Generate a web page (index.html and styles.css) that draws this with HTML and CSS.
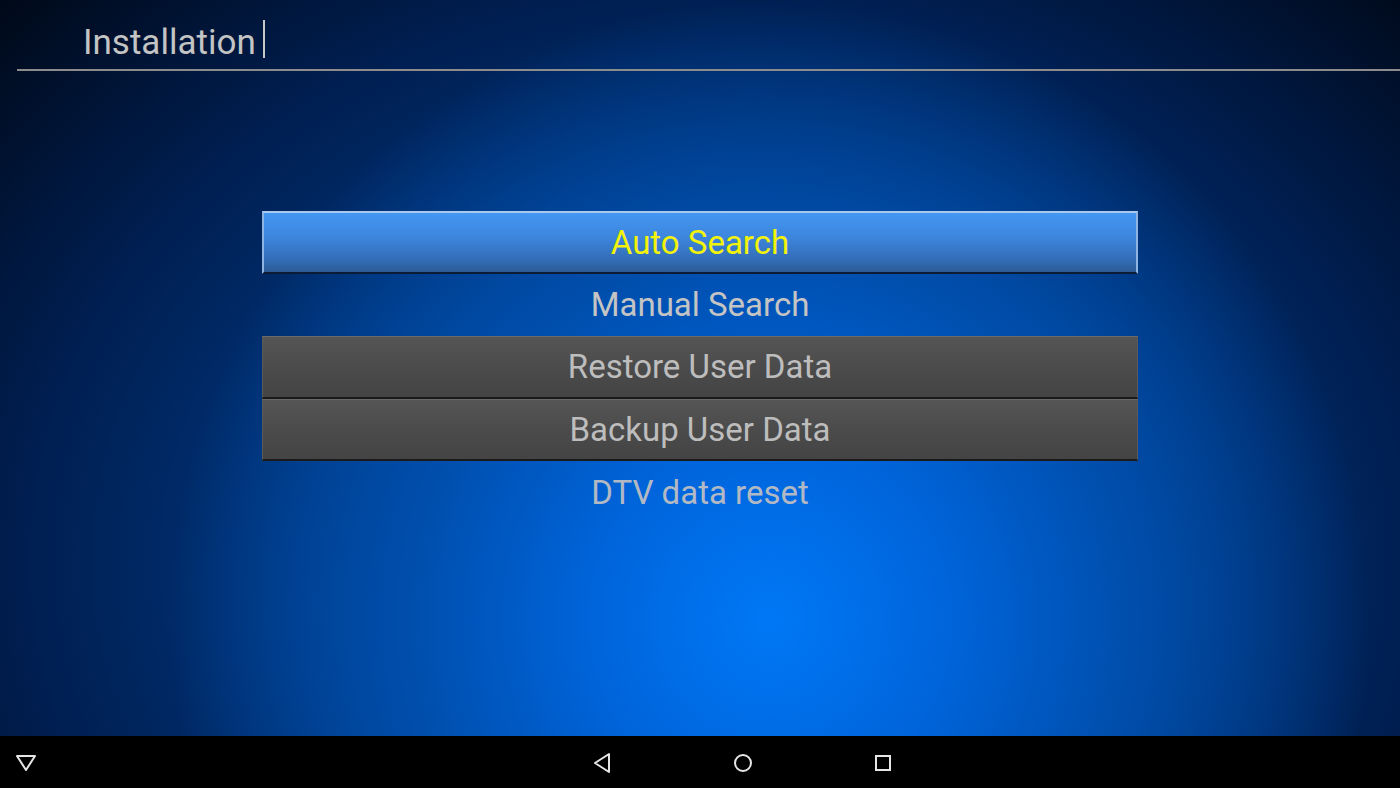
FILE: index.html
```html
<!DOCTYPE html>
<html lang="en">
<head>
  <meta charset="UTF-8">
  <meta name="viewport" content="width=device-width, initial-scale=1.0">
  <title>Installation</title>
  <link rel="stylesheet" href="styles.css">
</head>
<body>
  <div class="screen">
    <header class="header">
      <h1 class="title">Installation<span class="cursor"></span></h1>
    </header>

    <main class="content">
      <ul class="menu">
        <li class="item selected">Auto Search</li>
        <li class="item">Manual Search</li>
        <li class="item boxed">Restore User Data</li>
        <li class="item boxed">Backup User Data</li>
        <li class="item dim">DTV data reset</li>
      </ul>
    </main>

    <nav class="navbar">
      <div class="nav-left">
        <svg width="24" height="20" viewBox="0 0 24 20">
          <path d="M3 3 L21 3 L12 17 Z" fill="none" stroke="#e6e6e6" stroke-width="2" stroke-linejoin="round"/>
        </svg>
      </div>
      <div class="nav-center">
        <svg width="24" height="24" viewBox="0 0 24 24">
          <path d="M18 3 L18 21 L4 12 Z" fill="none" stroke="#e6e6e6" stroke-width="2" stroke-linejoin="round"/>
        </svg>
        <svg width="24" height="24" viewBox="0 0 24 24">
          <circle cx="12" cy="12" r="8" fill="none" stroke="#e6e6e6" stroke-width="2"/>
        </svg>
        <svg width="24" height="24" viewBox="0 0 24 24">
          <rect x="5" y="5" width="14" height="14" fill="none" stroke="#e6e6e6" stroke-width="2"/>
        </svg>
      </div>
    </nav>
  </div>
</body>
</html>
```

FILE: styles.css
```css
* {
  margin: 0;
  padding: 0;
  box-sizing: border-box;
}

html, body {
  width: 1400px;
  height: 788px;
  overflow: hidden;
  background: #000;
}

body {
  font-family: Roboto, 'Liberation Sans', sans-serif;
}

.screen {
  width: 1400px;
  height: 788px;
  display: flex;
  flex-direction: column;
  background:
    radial-gradient(ellipse 600px 620px at 770px 620px, #0078f6 0%, #0064da 30%, #004eac 60%, rgba(0, 60, 140, 0) 100%),
    radial-gradient(ellipse 1000px 820px at 720px 560px, #003e90 0%, #00357c 40%, #001e50 70%, #000816 100%);
}

.header {
  height: 71px;
  margin-left: 17px;
  border-bottom: 2px solid #8c8c8c;
  display: flex;
  align-items: flex-end;
  padding-left: 66px;
  padding-bottom: 9px;
}

.title {
  font-weight: 400;
  font-size: 35px;
  line-height: 1;
  color: #c4c4c4;
  display: flex;
  align-items: flex-end;
}

.cursor {
  display: inline-block;
  width: 2px;
  height: 38px;
  margin-left: 7px;
  margin-bottom: 2px;
  background: #c8c8c8;
}

.content {
  flex: 1;
  padding-top: 140px;
}

.menu {
  list-style: none;
  width: 876px;
  margin-left: 262px;
}

.item {
  height: 62.6px;
  display: flex;
  align-items: center;
  justify-content: center;
  font-size: 33px;
  color: #c4c4c4;
}

.selected {
  color: #f2f20a;
  background: linear-gradient(180deg, #4397f2 0%, #3d86de 40%, #336db6 80%, #2c5a96 100%);
  border-top: 2px solid #a8c8ee;
  border-left: 2px solid #8fb4e2;
  border-right: 2px solid #8fb4e2;
  border-bottom: 2px solid #0c1c36;
}

.boxed {
  color: #bdbdbd;
  background: linear-gradient(180deg, #555 0%, #4b4b4b 50%, #444 100%);
  border-top: 1px solid #6a6a6a;
  border-left: 1px solid #5a5a5a;
  border-right: 1px solid #5a5a5a;
  border-bottom: 2px solid #1a1a1a;
}

.dim {
  color: #b2b9c4;
}

.navbar {
  height: 52px;
  background: #000;
  display: flex;
  align-items: center;
}

.nav-left {
  width: 52px;
  display: flex;
  justify-content: center;
  padding-top: 2px;
}

.nav-center {
  display: flex;
  gap: 116px;
  margin-left: 539px;
  padding-top: 2px;
}
```
